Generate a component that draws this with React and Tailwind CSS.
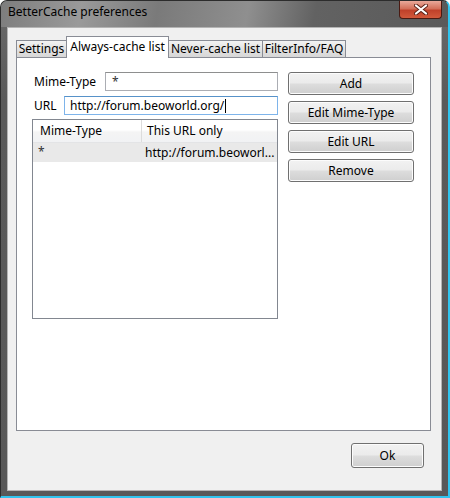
const font = { fontFamily: '"Segoe UI", "Noto Sans", sans-serif' }

const tabs = [
  { label: 'Settings', w: 'w-[51px]' },
  { label: 'Always-cache list', w: 'w-[103px]', active: true },
  { label: 'Never-cache list', w: 'w-[95px]' },
  { label: 'FilterInfo/FAQ', w: 'w-[84px]' },
]

const buttons = ['Add', 'Edit Mime-Type', 'Edit URL', 'Remove']

function VistaButton({ children, className = '' }) {
  return (
    <button
      className={`h-[23px] rounded-[3px] border border-[#707070] bg-[linear-gradient(to_bottom,#f2f2f2_0%,#ebebeb_48%,#dddddd_52%,#cfcfcf_100%)] text-[12px] text-black leading-none shadow-[inset_0_0_0_1px_#fcfcfc] ${className}`}
    >
      {children}
    </button>
  )
}

function CloseButton() {
  return (
    <div className="w-[43px] h-[18px] rounded-b-[4px] border border-t-0 border-[#4a1a12] bg-[linear-gradient(to_bottom,#e9a99a_0%,#d3705a_45%,#c0412a_55%,#d2593b_100%)] flex items-center justify-center">
      <svg width="14" height="11" viewBox="0 0 14 11">
        <path d="M2 1.5 L12 9.5 M12 1.5 L2 9.5" stroke="#5b2218" strokeWidth="4" strokeLinecap="round" />
        <path d="M2 1.5 L12 9.5 M12 1.5 L2 9.5" stroke="#ffffff" strokeWidth="2.2" strokeLinecap="round" />
      </svg>
    </div>
  )
}

export default function App() {
  return (
    <div className="w-[450px] h-[498px] bg-white" style={font}>
      <div className="w-[450px] h-[498px] rounded-t-[7px] border border-[#2c2c2c] border-r-[#30c4ee] border-b-[#30c4ee] border-r-2 border-b-2 bg-[linear-gradient(to_bottom,#6a6a6a,#5a5a5a_20%,#585858)] flex flex-col pb-[5px] overflow-hidden">
        {/* title bar */}
        <div className="h-[26px] px-[6px] flex items-start justify-between bg-[linear-gradient(100deg,#7d7d7d_0%,#9a9a9a_18%,#7a7a7a_35%,#8f8f8f_55%,#626262_70%,#5a5a5a_100%)]">
          <span className="pt-[2px] pl-[1px] text-[12px] text-black">BetterCache preferences</span>
          <CloseButton />
        </div>

        {/* client area */}
        <div className="flex-1 mx-[6px] border border-[#b4b4b4] bg-[#f0f0f0] flex flex-col pl-[8px] pr-[11px] pt-[8px]">
          {/* tab strip */}
          <div className="flex items-end h-[21px]">
            {tabs.map((t, i) => (
              <div
                key={t.label}
                className={`${t.w} ${i > 0 ? '-ml-px' : ''} border border-b-0 border-[#898c95] flex justify-center text-[12px] text-black whitespace-nowrap ${
                  t.active
                    ? 'relative z-10 h-[22px] -mb-px bg-white pt-[1px] items-start'
                    : 'h-[17px] bg-[linear-gradient(to_bottom,#f3f3f3,#e2e2e2_50%,#d7d7d7)] items-center'
                }`}
              >
                {t.label}
              </div>
            ))}
          </div>

          {/* panel */}
          <div className="w-[415px] h-[374px] border border-[#898c95] bg-white flex pl-[15px] pt-[14px]">
            {/* left column */}
            <div className="w-[246px] flex flex-col">
              <div className="flex items-center justify-between h-[19px]">
                <span className="pl-[2px] text-[12px] text-black">Mime-Type</span>
                <div className="w-[173px] h-[19px] border border-[#abadb3] border-t-[#8e8f8f] bg-white flex items-start pl-[6px] text-[12px] text-[#333]">
                  *
                </div>
              </div>
              <div className="flex items-center justify-between h-[19px] mt-[5px]">
                <span className="pl-[2px] text-[12px] text-black">URL</span>
                <div className="w-[214px] h-[19px] border border-[#7eb4ea] border-t-[#5792c9] bg-white flex items-center pl-[5px] text-[12px] text-black">
                  http://forum.beoworld.org/
                  <span className="inline-block w-px h-[14px] bg-black ml-px" />
                </div>
              </div>

              {/* list */}
              <div className="mt-[4px] h-[200px] border border-[#828790] bg-white flex flex-col">
                <div className="h-[23px] flex text-[12px] text-black bg-[linear-gradient(to_bottom,#ffffff,#ffffff_45%,#f4f4f4_55%,#f1f2f4)] border-b border-[#e3e4e6]">
                  <div className="w-[109px] pl-[7px] flex items-center border-r border-[#dcdcdc]">Mime-Type</div>
                  <div className="flex-1 pl-[5px] flex items-center">This URL only</div>
                </div>
                <div className="h-[19px] flex text-[12px] text-black bg-[#e9e9e9]">
                  <div className="w-[109px] pl-[5px] flex items-start text-[#333]">*</div>
                  <div className="flex-1 pl-[3px] flex items-center overflow-hidden whitespace-nowrap">http://forum.beoworl...</div>
                </div>
              </div>
            </div>

            {/* right column */}
            <div className="ml-[10px] w-[126px] flex flex-col gap-[6px]">
              {buttons.map((b) => (
                <VistaButton key={b} className="w-full">
                  {b}
                </VistaButton>
              ))}
            </div>
          </div>

          {/* bottom */}
          <div className="flex justify-end pt-[12px] pr-[6px]">
            <VistaButton className="w-[73px] h-[25px]">Ok</VistaButton>
          </div>
        </div>
      </div>
    </div>
  )
}
